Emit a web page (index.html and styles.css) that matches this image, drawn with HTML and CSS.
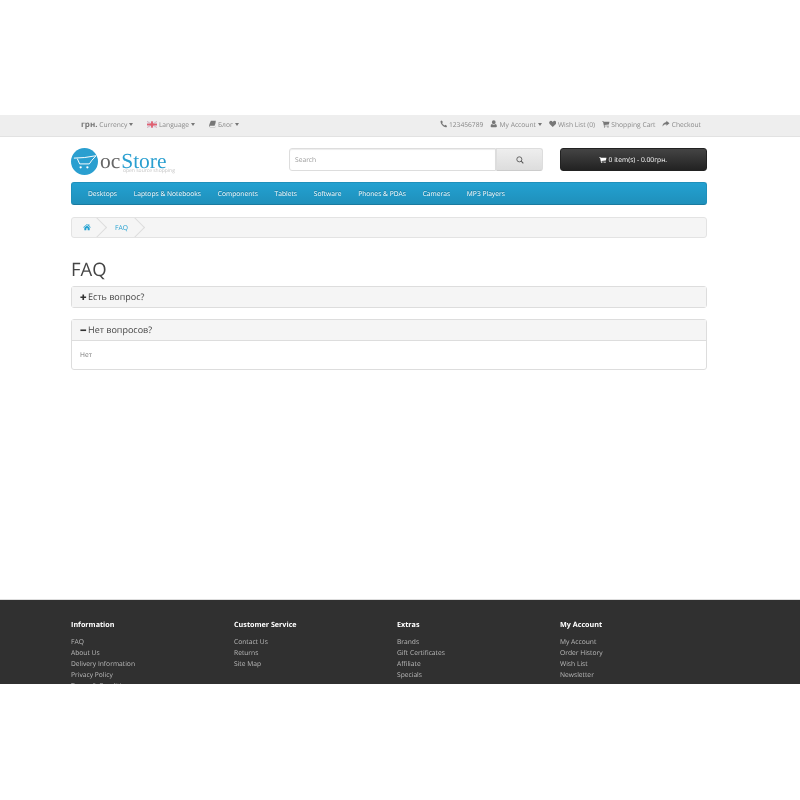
FILE: index.html
```html
<!DOCTYPE html>
<html>
<head>
	<meta charset=utf-8>
	<title>FAQ</title>
	<link rel="stylesheet" href="styles.css">
</head>
<body>
<div class=page>
	<nav class=top>
		<div class="container top-row">
			<div class=top-left>
				<span class=top-item><b>грн.</b> Currency <i class=caret></i></span>
				<span class=top-item>
					<svg class=flag viewBox="0 0 11 7"><rect width=11 height=7 fill="#dfe3ee"/><path d="M0 0l11 7M11 0L0 7" stroke="#d8a0a8" stroke-width=".8"/><rect x=4.5 width=2 height=7 fill="#e06070"/><rect y=2.5 width=11 height=2 fill="#e06070"/></svg>
					Language <i class=caret></i></span>
				<span class=top-item>
					<svg class=ico viewBox="0 0 12 12"><path d="M3 1h8L9 9H1.500Q.5 9 .7 10t1.300 1h7.500l1-.8L11 3l.6.6L10 11.600H2Q0 11.600 0 10t1-4z" fill="#777"/></svg>
					Блог <i class=caret></i></span>
			</div>
			<div class=top-right>
				<span class=top-link>
					<svg class=ico viewBox="0 0 12 12"><path d="M2.800 .6L1 1.600Q.2 5 3.500 8.500T10.400 11.400l1-1.800-2.600-2-1.400 1Q5.800 8 4.700 6.800T3.600 4.600l1-1.400z" fill="#777"/></svg>
					123456789</span>
				<span class=top-link>
					<svg class=ico viewBox="0 0 12 12"><path d="M6 .5a2.800 2.800 0 0 1 0 6a2.800 2.800 0 0 1 0-6zM3 6.500Q6 8.300 9 6.500q2 .5 2 3.500 0 1.500-1.500 1.500h-7Q1 11.500 1 10q0-3 2-3.500z" fill="#777"/></svg>
					My Account <i class=caret></i></span>
				<span class=top-link>
					<svg class=ico viewBox="0 0 12 12"><path d="M6 11.200L1 6.200Q-.5 4 1 2.300t3.500-.6L6 3l1.500-1.300q2-1.100 3.500.6t0 3.900z" fill="#777"/></svg>
					Wish List (0)</span>
				<span class=top-link>
					<svg class=ico viewBox="0 0 12 12"><path d="M0 1.500h2.200l.3 1.200H12l-1 4.600-7 .8.200 1h6.800v1H3.200L1.500 2.500H0z" fill="#777"/><circle cx=4 cy=11 r=1 fill="#777"/><circle cx=9.500 cy=11 r=1 fill="#777"/></svg>
					Shopping Cart</span>
				<span class=top-link>
					<svg class=ico viewBox="0 0 12 12"><path d="M7 1l5 4-5 4V6.700Q2.500 6.500 1 10.500 0 5 7 3.300z" fill="#777"/></svg>
					Checkout</span>
			</div>
		</div>
	</nav>
	<header class="container head">
		<div class=logo>
			<svg class=logo-mark viewBox="0 0 28 28"><circle cx=14 cy=14 r=14 fill="#2a9fd0"/><path d="M3 10.500Q14 10.500 26 8 21 13 19 16.500H9L6.500 11" fill="none" stroke="#fff" stroke-width="1"/><circle cx=10 cy=20 r=1.200 fill="#fff"/><circle cx=17 cy=20 r=1.200 fill="#fff"/></svg>
			<div class=logo-text>
				<div class=logo-name><span class=logo-oc>oc</span> <span class=logo-store>Store</span></div>
				<div class=logo-sub>open source shopping</div>
			</div>
		</div>
		<div class=search>
			<div class=search-input>Search</div>
			<div class=search-btn>
				<svg class=search-ico viewBox="0 0 12 12"><circle cx=5 cy=5 r=3.800 fill="none" stroke="#555" stroke-width="1.300"/><path d="M7.800 7.800L11 11" stroke="#555" stroke-width="1.600"/></svg>
			</div>
		</div>
		<div class=cart>
			<svg class=ico viewBox="0 0 12 12"><path d="M0 1.500h2.200l.3 1.200H12l-1 4.600-7 .8.200 1h6.800v1H3.200L1.500 2.500H0z" fill="#fff"/><circle cx=4 cy=11 r=1 fill="#fff"/><circle cx=9.500 cy=11 r=1 fill="#fff"/></svg>
			0 item(s) - 0.00грн.
		</div>
	</header>
	<main class=container>
		<nav class=menu>
			<a>Desktops</a>
			<a>Laptops &amp; Notebooks</a>
			<a>Components</a>
			<a>Tablets</a>
			<a>Software</a>
			<a>Phones &amp; PDAs</a>
			<a>Cameras</a>
			<a>MP3 Players</a>
		</nav>
		<ul class=crumbs>
			<li><svg class=home viewBox="0 0 12 12"><path d="M6 1.500L.3 6.300l.6.700L6 2.800 11.100 7l.6-.7-2.200-1.900V2H8v1.200zM2 7.200V11h3V8h2v3h3V7.200L6 3.900z" fill="#23a1d1"/></svg></li>
			<li>FAQ</li>
		</ul>
		<h1>FAQ</h1>
		<section class=panel>
			<h4><svg class=sign viewBox="0 0 8 8"><path d="M3 .5h2V3h2.500v2H5v2.500H3V5H.5V3H3z" fill="#333"/></svg>Есть вопрос?</h4>
		</section>
		<section class=panel>
			<h4><svg class=sign viewBox="0 0 8 8"><path d="M.5 3h7v2h-7z" fill="#333"/></svg>Нет вопросов?</h4>
			<p>Нет</p>
		</section>
	</main>
	<footer class=foot>
		<div class="container foot-cols">
			<div>
				<h5>Information</h5>
				<a>FAQ</a>
				<a>About Us</a>
				<a>Delivery Information</a>
				<a>Privacy Policy</a>
				<a>Terms &amp; Conditions</a>
			</div>
			<div>
				<h5>Customer Service</h5>
				<a>Contact Us</a>
				<a>Returns</a>
				<a>Site Map</a>
			</div>
			<div>
				<h5>Extras</h5>
				<a>Brands</a>
				<a>Gift Certificates</a>
				<a>Affiliate</a>
				<a>Specials</a>
			</div>
			<div>
				<h5>My Account</h5>
				<a>My Account</a>
				<a>Order History</a>
				<a>Wish List</a>
				<a>Newsletter</a>
			</div>
		</div>
	</footer>
</div>
</body>
</html>
```
FILE: styles.css
```css
* {
	margin: 0;
	padding: 0;
	box-sizing: border-box;
}
body {
	background: #fff;
	font-family: "Open Sans", sans-serif;
	font-size: 6.700px;
	color: #666;
	text-rendering: geometricPrecision;
}
/* the reference is a scaled down shot, so everything is a little soft */
.page {
	display: flex;
	flex-direction: column;
	height: 569px;
	margin-top: 115px;
	overflow: hidden;
	filter: blur(.3px);
	will-change: transform;
}
.container {
	width: 635.500px;
	margin-left: 71px;
}
.ico {
	width: 7.500px;
	height: 7.500px;
	vertical-align: -1px;
}
.caret {
	display: inline-block;
	width: 0;
	height: 0;
	vertical-align: 1px;
	border-top: 3px solid #777;
	border-left: 2.500px solid transparent;
	border-right: 2.500px solid transparent;
}

.top {
	flex: none;
	height: 22px;
	background: #eee;
	border-bottom: 1px solid #e2e2e2;
}
.top-row {
	display: flex;
	justify-content: space-between;
	align-items: center;
	height: 19px;
	line-height: 10px;
	color: #888;
}
.top-left {
	display: flex;
	align-items: baseline;
	gap: 14px;
	padding-left: 10px;
}
.top-left b {
	font-size: 8px;
	color: #777;
}
.top-right {
	display: flex;
	align-items: baseline;
	gap: 7px;
	padding-right: 5.500px;
}
.flag {
	width: 10px;
	height: 7px;
	vertical-align: -1px;
}

.head {
	flex: none;
	display: flex;
	align-items: flex-start;
	height: 45px;
}
.logo {
	display: flex;
	gap: 2px;
	width: 218px;
	padding-top: 11px;
}
.logo-mark {
	width: 27px;
	height: 27px;
}
.logo-name {
	font-family: "Liberation Serif", serif;
	font-size: 21.500px;
	line-height: 22px;
	margin-top: 2px;
	white-space: nowrap;
	word-spacing: -4.500px;
}
.logo-oc {
	color: #666;
}
.logo-store {
	color: #2a9fd0;
}
.logo-sub {
	margin: -4px 0 0 23px;
	font-size: 5px;
	line-height: 6px;
	color: #c4c4c4;
	white-space: nowrap;
}
.search {
	display: flex;
	width: 254px;
	height: 23px;
	margin-top: 11px;
}
.search-input {
	flex: 1;
	padding: 0 5px;
	line-height: 21px;
	font-size: 6.700px;
	color: #999;
	background: #fff;
	border: 1px solid #ddd;
	border-radius: 3px 0 0 3px;
	box-shadow: inset 0 1px 1px rgba(0,0,0,.075);
}
.search-btn {
	display: flex;
	align-items: center;
	justify-content: center;
	width: 47px;
	background: linear-gradient(#eee, #ddd);
	border: 1px solid #ddd;
	border-bottom-color: #ccc;
	border-radius: 0 3px 3px 0;
}
.search-ico {
	width: 8px;
	height: 8px;
}
.cart {
	width: 146.500px;
	height: 23px;
	margin: 11px 0 0 17px;
	line-height: 21px;
	text-align: center;
	color: #fff;
	background: linear-gradient(#444, #222);
	border: 1px solid #222;
	border-radius: 3px;
}

.menu {
	display: flex;
	gap: 16.700px;
	height: 23px;
	padding-left: 16px;
	line-height: 22px;
	color: #fff;
	text-shadow: 0 -1px 0 rgba(0,0,0,.25);
	background: linear-gradient(#23a1d1, #1f90bb);
	border: 1px solid #1f90bb;
	border-bottom-color: #1a7a9f;
	border-radius: 3px;
}
.crumbs {
	display: flex;
	height: 21px;
	margin-top: 12px;
	overflow: hidden;
	list-style: none;
	line-height: 19px;
	color: #23a1d1;
	background: #f5f5f5;
	border: 1px solid #e3e3e3;
	border-radius: 3px;
}
.crumbs li {
	position: relative;
	padding: 0 9px 0 11px;
}
.crumbs li + li {
	padding: 0 10px 0 15px;
}
.crumbs li::after {
	content: "";
	position: absolute;
	top: 2px;
	right: -4px;
	width: 14px;
	height: 14px;
	border-top: 1px solid #ddd;
	border-right: 1px solid #ddd;
	transform: rotate(45deg);
}
.home {
	width: 8px;
	height: 8px;
	vertical-align: -1px;
}
h1 {
	margin-top: 18px;
	font-size: 18.500px;
	font-weight: 400;
	line-height: 27px;
	color: #444;
}
.panel {
	margin-bottom: 11px;
	background: #fff;
	border: 1px solid #ddd;
	border-radius: 3px;
}
.panel:first-of-type {
	margin-top: 3px;
}
.panel h4 {
	height: 20px;
	padding-left: 8px;
	font-size: 9px;
	font-weight: 400;
	line-height: 19px;
	color: #444;
	background: #f5f5f5;
}
.panel p {
	height: 29px;
	padding: 9px 8px;
	line-height: 9px;
	font-size: 6.700px;
	color: #777;
	border-top: 1px solid #ddd;
}
.sign {
	width: 6.500px;
	height: 6.500px;
	margin-right: 1.500px;
	vertical-align: -.500px;
}

.foot {
	flex: none;
	height: 85px;
	margin-top: auto;
	padding-top: 20px;
	color: #bbb;
	background: #303030;
	border-top: 1px solid #ddd;
}
.foot-cols {
	display: grid;
	grid-template-columns: repeat(4, 163px);
}
.foot h5 {
	margin-bottom: 5px;
	font-size: 7.200px;
	font-weight: 700;
	line-height: 11px;
	color: #fff;
}
.foot a {
	display: block;
	line-height: 11.100px;
}
```
